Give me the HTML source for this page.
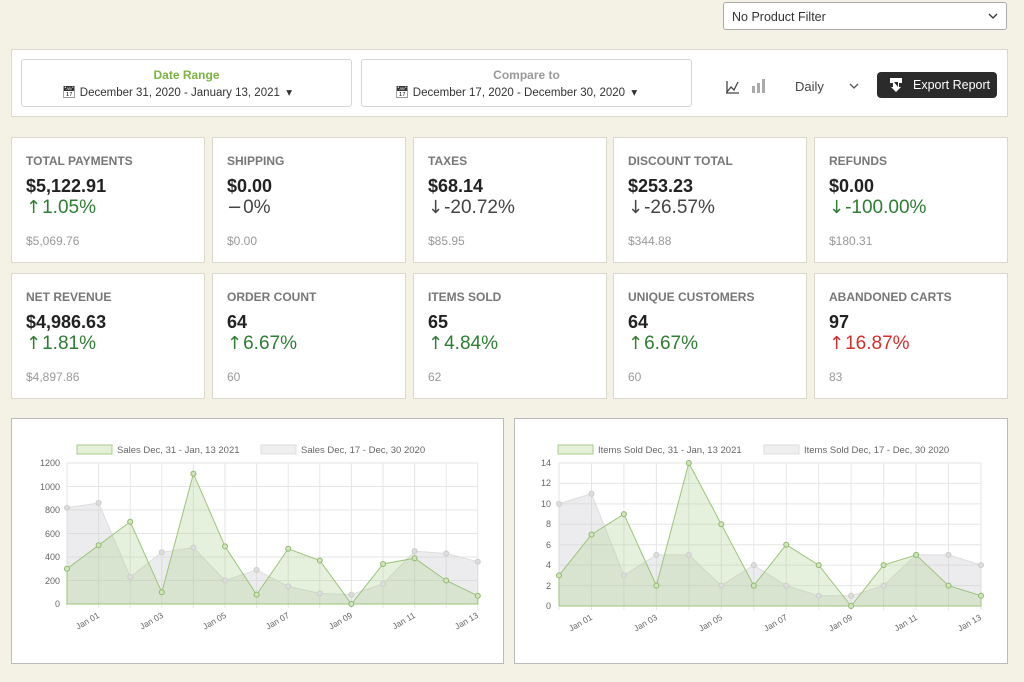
<!DOCTYPE html>
<html><head><meta charset="utf-8"><style>
*{box-sizing:border-box;margin:0;padding:0}
body{width:1024px;height:682px;background:#f4f1e5;font-family:"Liberation Sans",sans-serif;position:relative;overflow:hidden;color:#333}
.abs{position:absolute}
.box{position:absolute;background:#fff;border:1px solid #dcd9cc}
.card .t{position:absolute;left:14px;top:16px;font-size:12px;font-weight:bold;color:#777}
.card .v{position:absolute;left:14px;top:38px;font-size:18px;font-weight:bold;color:#222}
.card .p{position:absolute;left:14px;top:59px;font-size:19px;color:#2e7d32}
.card .p b{font-family:"DejaVu Sans",sans-serif;font-weight:normal;font-size:18px;margin-right:1px}
.card .o{position:absolute;left:14px;top:96px;font-size:12px;color:#999}
.sel{position:absolute;background:#fff;border:1px solid #ccc;border-radius:3px}
</style></head><body>
<div class="sel" style="left:723px;top:2px;width:284px;height:28px;border-color:#aaa"><span class="abs" style="left:8px;top:7px;font-size:12.5px;color:#333">No Product Filter</span><svg class="abs" style="right:8px;top:10px" width="10" height="7"><path d="M1 1L5 5 9 1" stroke="#333" fill="none" stroke-width="1.3"/></svg></div>
<div class="box" style="left:11px;top:49px;width:997px;height:68px"></div>
<div class="sel" style="left:21px;top:59px;width:331px;height:48px;border-color:#d6d6d6"><div class="abs" style="left:0;right:0;top:8px;text-align:center;font-size:12px;font-weight:bold;color:#7cb342">Date Range</div><div class="abs" style="left:40px;top:25px;font-size:11.5px;color:#333">&#128197;&#xFE0E; December 31, 2020 - January 13, 2021 &nbsp;&#9662;</div></div>
<div class="sel" style="left:361px;top:59px;width:331px;height:48px;border-color:#d6d6d6"><div class="abs" style="left:0;right:0;top:8px;text-align:center;font-size:12px;font-weight:bold;color:#999">Compare to</div><div class="abs" style="left:33px;top:25px;font-size:11.5px;color:#333">&#128197;&#xFE0E; December 17, 2020 - December 30, 2020 &nbsp;&#9662;</div></div>
<svg class="abs" style="left:724px;top:77px" width="46" height="18"><path d="M2 16H15M3 15L7 10 10 13 14 5M3 4V16" stroke="#444" fill="none" stroke-width="1.3"/><rect x="28" y="9" width="3" height="7" fill="#aaa"/><rect x="33" y="6" width="3" height="10" fill="#aaa"/><rect x="38" y="2" width="3" height="14" fill="#aaa"/></svg>
<span class="abs" style="left:795px;top:79px;font-size:13px;color:#444">Daily</span>
<svg class="abs" style="left:849px;top:83px" width="10" height="7"><path d="M1 1L5 5 9 1" stroke="#555" fill="none" stroke-width="1.3"/></svg>
<div class="abs" style="left:877px;top:72px;width:120px;height:26px;background:#2b2b2b;border-radius:4px;color:#fff;font-size:12.5px"><svg class="abs" style="left:12px;top:5px" width="14" height="16"><path d="M1 1H13V6H10V10H12L7 15 2 10H4V6H1Z" fill="#fff"/><path d="M5 5H9V10" fill="#2b2b2b"/></svg><span class="abs" style="left:36px;top:6px">Export Report</span></div>

<div class="box card" style="left:11px;top:137px;width:194px;height:126px"><div class="t">TOTAL PAYMENTS</div><div class="v">$5,122.91</div><div class="p"><b>&#8593;</b>1.05%</div><div class="o">$5,069.76</div></div>
<div class="box card" style="left:212px;top:137px;width:194px;height:126px"><div class="t">SHIPPING</div><div class="v">$0.00</div><div class="p" style="color:#444"><b>&#8722;</b>0%</div><div class="o">$0.00</div></div>
<div class="box card" style="left:413px;top:137px;width:194px;height:126px"><div class="t">TAXES</div><div class="v">$68.14</div><div class="p" style="color:#444"><b>&#8595;</b>-20.72%</div><div class="o">$85.95</div></div>
<div class="box card" style="left:613px;top:137px;width:194px;height:126px"><div class="t">DISCOUNT TOTAL</div><div class="v">$253.23</div><div class="p" style="color:#444"><b>&#8595;</b>-26.57%</div><div class="o">$344.88</div></div>
<div class="box card" style="left:814px;top:137px;width:194px;height:126px"><div class="t">REFUNDS</div><div class="v">$0.00</div><div class="p"><b>&#8595;</b>-100.00%</div><div class="o">$180.31</div></div>
<div class="box card" style="left:11px;top:273px;width:194px;height:126px"><div class="t">NET REVENUE</div><div class="v">$4,986.63</div><div class="p"><b>&#8593;</b>1.81%</div><div class="o">$4,897.86</div></div>
<div class="box card" style="left:212px;top:273px;width:194px;height:126px"><div class="t">ORDER COUNT</div><div class="v">64</div><div class="p"><b>&#8593;</b>6.67%</div><div class="o">60</div></div>
<div class="box card" style="left:413px;top:273px;width:194px;height:126px"><div class="t">ITEMS SOLD</div><div class="v">65</div><div class="p"><b>&#8593;</b>4.84%</div><div class="o">62</div></div>
<div class="box card" style="left:613px;top:273px;width:194px;height:126px"><div class="t">UNIQUE CUSTOMERS</div><div class="v">64</div><div class="p"><b>&#8593;</b>6.67%</div><div class="o">60</div></div>
<div class="box card" style="left:814px;top:273px;width:194px;height:126px"><div class="t">ABANDONED CARTS</div><div class="v">97</div><div class="p" style="color:#d32f2f"><b>&#8593;</b>16.87%</div><div class="o">83</div></div>

<div class="box" style="left:11px;top:418px;width:493px;height:246px;border-color:#bbb"></div>
<div class="box" style="left:514px;top:418px;width:494px;height:246px;border-color:#bbb"></div>

<svg class="abs" style="left:0;top:0" width="1024" height="682" font-family="Liberation Sans, sans-serif" font-size="9" fill="#666">
<g stroke="#e6e6e6" stroke-width="1">
<path d="M67 604H478M67 580.5H478M67 557H478M67 533.5H478M67 510H478M67 486.5H478M67 463H478"/>
<path d="M67 463V608M98.6 463V608M130.2 463V608M161.8 463V608M193.4 463V608M225 463V608M256.6 463V608M288.2 463V608M319.8 463V608M351.4 463V608M383 463V608M414.6 463V608M446.2 463V608M477.8 463V608"/>
<path d="M559 606H981M559 585.6H981M559 565.1H981M559 544.7H981M559 524.3H981M559 503.9H981M559 483.4H981M559 463H981"/>
<path d="M559 463V610M591.5 463V610M623.9 463V610M656.4 463V610M688.8 463V610M721.3 463V610M753.8 463V610M786.2 463V610M818.7 463V610M851.1 463V610M883.6 463V610M916.1 463V610M948.5 463V610M981 463V610"/>
</g>
<path d="M67 604L67 507.7 98.6 503 130.2 577 161.8 552.3 193.4 547.6 225 580.5 256.6 569.9 288.2 586.4 319.8 593.4 351.4 594.6 383 584 414.6 551.1 446.2 553.5 477.8 561.7 477.8 604Z" fill="rgba(200,200,205,0.35)" stroke="#ddd"/>
<path d="M67 604L67 568.7 98.6 545.3 130.2 521.8 161.8 592.3 193.4 473.6 225 546.4 256.6 594.6 288.2 548.8 319.8 560.5 351.4 604 383 564 414.6 558.2 446.2 580.5 477.8 595.8 477.8 604Z" fill="rgba(170,210,140,0.3)" stroke="#9cc47a"/>
<path d="M559 606L559 503.9 591.5 493.6 623.9 575.4 656.4 554.9 688.8 554.9 721.3 585.6 753.8 565.1 786.2 585.6 818.7 595.8 851.1 595.8 883.6 585.6 916.1 554.9 948.5 554.9 981 565.1 981 606Z" fill="rgba(200,200,205,0.35)" stroke="#ddd"/>
<path d="M559 606L559 575.4 591.5 534.5 623.9 514.1 656.4 585.6 688.8 463 721.3 524.3 753.8 585.6 786.2 544.7 818.7 565.1 851.1 606 883.6 565.1 916.1 554.9 948.5 585.6 981 595.8 981 606Z" fill="rgba(170,210,140,0.3)" stroke="#9cc47a"/>
<g fill="#ddd" stroke="#ccc"><circle cx="67" cy="507.7" r="2.5"/><circle cx="98.6" cy="503" r="2.5"/><circle cx="130.2" cy="577" r="2.5"/><circle cx="161.8" cy="552.3" r="2.5"/><circle cx="193.4" cy="547.6" r="2.5"/><circle cx="225" cy="580.5" r="2.5"/><circle cx="256.6" cy="569.9" r="2.5"/><circle cx="288.2" cy="586.4" r="2.5"/><circle cx="319.8" cy="593.4" r="2.5"/><circle cx="351.4" cy="594.6" r="2.5"/><circle cx="383" cy="584" r="2.5"/><circle cx="414.6" cy="551.1" r="2.5"/><circle cx="446.2" cy="553.5" r="2.5"/><circle cx="477.8" cy="561.7" r="2.5"/>
<circle cx="559" cy="503.9" r="2.5"/><circle cx="591.5" cy="493.6" r="2.5"/><circle cx="623.9" cy="575.4" r="2.5"/><circle cx="656.4" cy="554.9" r="2.5"/><circle cx="688.8" cy="554.9" r="2.5"/><circle cx="721.3" cy="585.6" r="2.5"/><circle cx="753.8" cy="565.1" r="2.5"/><circle cx="786.2" cy="585.6" r="2.5"/><circle cx="818.7" cy="595.8" r="2.5"/><circle cx="851.1" cy="595.8" r="2.5"/><circle cx="883.6" cy="585.6" r="2.5"/><circle cx="916.1" cy="554.9" r="2.5"/><circle cx="948.5" cy="554.9" r="2.5"/><circle cx="981" cy="565.1" r="2.5"/></g>
<g fill="#cfe4bb" stroke="#8fba6a"><circle cx="67" cy="568.7" r="2.5"/><circle cx="98.6" cy="545.3" r="2.5"/><circle cx="130.2" cy="521.8" r="2.5"/><circle cx="161.8" cy="592.3" r="2.5"/><circle cx="193.4" cy="473.6" r="2.5"/><circle cx="225" cy="546.4" r="2.5"/><circle cx="256.6" cy="594.6" r="2.5"/><circle cx="288.2" cy="548.8" r="2.5"/><circle cx="319.8" cy="560.5" r="2.5"/><circle cx="351.4" cy="604" r="2.5"/><circle cx="383" cy="564" r="2.5"/><circle cx="414.6" cy="558.2" r="2.5"/><circle cx="446.2" cy="580.5" r="2.5"/><circle cx="477.8" cy="595.8" r="2.5"/>
<circle cx="559" cy="575.4" r="2.5"/><circle cx="591.5" cy="534.5" r="2.5"/><circle cx="623.9" cy="514.1" r="2.5"/><circle cx="656.4" cy="585.6" r="2.5"/><circle cx="688.8" cy="463" r="2.5"/><circle cx="721.3" cy="524.3" r="2.5"/><circle cx="753.8" cy="585.6" r="2.5"/><circle cx="786.2" cy="544.7" r="2.5"/><circle cx="818.7" cy="565.1" r="2.5"/><circle cx="851.1" cy="606" r="2.5"/><circle cx="883.6" cy="565.1" r="2.5"/><circle cx="916.1" cy="554.9" r="2.5"/><circle cx="948.5" cy="585.6" r="2.5"/><circle cx="981" cy="595.8" r="2.5"/></g>
<g text-anchor="end"><text x="60" y="607">0</text><text x="60" y="584">200</text><text x="60" y="560">400</text><text x="60" y="537">600</text><text x="60" y="513">800</text><text x="60" y="490">1000</text><text x="60" y="466">1200</text>
<text x="551" y="609">0</text><text x="551" y="589">2</text><text x="551" y="568">4</text><text x="551" y="548">6</text><text x="551" y="527">8</text><text x="551" y="507">10</text><text x="551" y="486">12</text><text x="551" y="466">14</text></g>
<g font-size="8.5" text-anchor="end"><text transform="translate(100,617) rotate(-30)">Jan 01</text><text transform="translate(164,617) rotate(-30)">Jan 03</text><text transform="translate(227,617) rotate(-30)">Jan 05</text><text transform="translate(290,617) rotate(-30)">Jan 07</text><text transform="translate(353,617) rotate(-30)">Jan 09</text><text transform="translate(416,617) rotate(-30)">Jan 11</text><text transform="translate(479,617) rotate(-30)">Jan 13</text>
<text transform="translate(593,619) rotate(-30)">Jan 01</text><text transform="translate(658,619) rotate(-30)">Jan 03</text><text transform="translate(723,619) rotate(-30)">Jan 05</text><text transform="translate(788,619) rotate(-30)">Jan 07</text><text transform="translate(853,619) rotate(-30)">Jan 09</text><text transform="translate(918,619) rotate(-30)">Jan 11</text><text transform="translate(982,619) rotate(-30)">Jan 13</text></g>
<g font-size="9.5"><rect x="77" y="445" width="35" height="9" fill="#e4f0d8" stroke="#a9cc8a"/><text x="117" y="453">Sales Dec, 31 - Jan, 13 2021</text>
<rect x="261" y="445" width="35" height="9" fill="#efeff0" stroke="#ddd"/><text x="301" y="453">Sales Dec, 17 - Dec, 30 2020</text>
<rect x="558" y="445" width="35" height="9" fill="#e4f0d8" stroke="#a9cc8a"/><text x="598" y="453">Items Sold Dec, 31 - Jan, 13 2021</text>
<rect x="764" y="445" width="35" height="9" fill="#efeff0" stroke="#ddd"/><text x="804" y="453">Items Sold Dec, 17 - Dec, 30 2020</text></g>
</svg>
</body></html>
